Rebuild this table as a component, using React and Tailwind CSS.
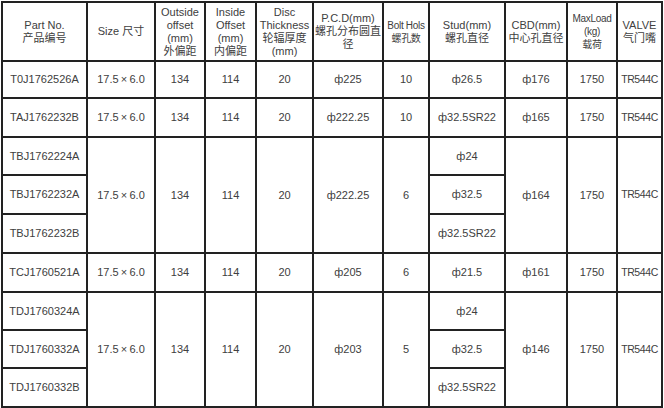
import React from "react";

const cols = [85, 68, 50, 51, 57, 70, 46, 76, 62, 50, 45];
const B = "border-2 border-[#222]";
const cell = `${B} text-center align-middle p-0 whitespace-nowrap`;

function H({ lines, small }) {
  return (
    <th className={`${cell} font-normal leading-[13px] ${small ? "text-[10px] tracking-[-0.3px]" : ""}`}>
      {lines.map((l, i) => (
        <div key={i}>{l}</div>
      ))}
    </th>
  );
}

function C({ children, rowSpan }) {
  return (
    <td rowSpan={rowSpan} className={cell}>
      {children}
    </td>
  );
}

function V({ rowSpan }) {
  return (
    <td rowSpan={rowSpan} className={`${cell} text-[10.5px] tracking-[-0.4px]`}>
      TR544C
    </td>
  );
}

const S = "17.5\u2009×\u20096.0";

export default function App() {
  return (
    <div className="w-[664px] h-[408px] bg-white pt-px pl-px text-[11px] text-[#404040]" style={{ fontFamily: '"Liberation Sans", "Noto Sans CJK SC", sans-serif' }}>
      <table className="border-collapse table-fixed w-[660px]">
        <colgroup>
          {cols.map((w, i) => (
            <col key={i} style={{ width: w }} />
          ))}
        </colgroup>
        <thead>
          <tr className="h-[59px]">
            <H lines={["Part No.", "产品编号"]} />
            <H lines={["Size 尺寸"]} />
            <H lines={["Outside", "offset", "(mm)", "外偏距"]} />
            <H lines={["Inside", "Offset", "(mm)", "内偏距"]} />
            <H lines={["Disc", "Thickness", "轮辐厚度", "(mm)"]} />
            <H lines={["P.C.D(mm)", "螺孔分布圆直", "径"]} />
            <H lines={["Bolt Hols", "螺孔数"]} small />
            <H lines={["Stud(mm)", "螺孔直径"]} />
            <H lines={["CBD(mm)", "中心孔直径"]} />
            <H lines={["MaxLoad", "(kg)", "载荷"]} small />
            <H lines={["VALVE", "气门嘴"]} />
          </tr>
        </thead>
        <tbody>
          <tr className="h-[37px]">
            <C>T0J1762526A</C><C>{S}</C><C>134</C><C>114</C><C>20</C><C>ф225</C><C>10</C><C>ф26.5</C><C>ф176</C><C>1750</C><V />
          </tr>
          <tr className="h-[39px]">
            <C>TAJ1762232B</C><C>{S}</C><C>134</C><C>114</C><C>20</C><C>ф222.25</C><C>10</C><C>ф32.5SR22</C><C>ф165</C><C>1750</C><V />
          </tr>
          <tr className="h-[38px]">
            <C>TBJ1762224A</C>
            <C rowSpan={3}>{S}</C><C rowSpan={3}>134</C><C rowSpan={3}>114</C><C rowSpan={3}>20</C><C rowSpan={3}>ф222.25</C><C rowSpan={3}>6</C>
            <C>ф24</C>
            <C rowSpan={3}>ф164</C><C rowSpan={3}>1750</C><V rowSpan={3} />
          </tr>
          <tr className="h-[39px]">
            <C>TBJ1762232A</C><C>ф32.5</C>
          </tr>
          <tr className="h-[39px]">
            <C>TBJ1762232B</C><C>ф32.5SR22</C>
          </tr>
          <tr className="h-[39px]">
            <C>TCJ1760521A</C><C>{S}</C><C>134</C><C>114</C><C>20</C><C>ф205</C><C>6</C><C>ф21.5</C><C>ф161</C><C>1750</C><V />
          </tr>
          <tr className="h-[38px]">
            <C>TDJ1760324A</C>
            <C rowSpan={3}>{S}</C><C rowSpan={3}>134</C><C rowSpan={3}>114</C><C rowSpan={3}>20</C><C rowSpan={3}>ф203</C><C rowSpan={3}>5</C>
            <C>ф24</C>
            <C rowSpan={3}>ф146</C><C rowSpan={3}>1750</C><V rowSpan={3} />
          </tr>
          <tr className="h-[38px]">
            <C>TDJ1760332A</C><C>ф32.5</C>
          </tr>
          <tr className="h-[39px]">
            <C>TDJ1760332B</C><C>ф32.5SR22</C>
          </tr>
        </tbody>
      </table>
    </div>
  );
}
